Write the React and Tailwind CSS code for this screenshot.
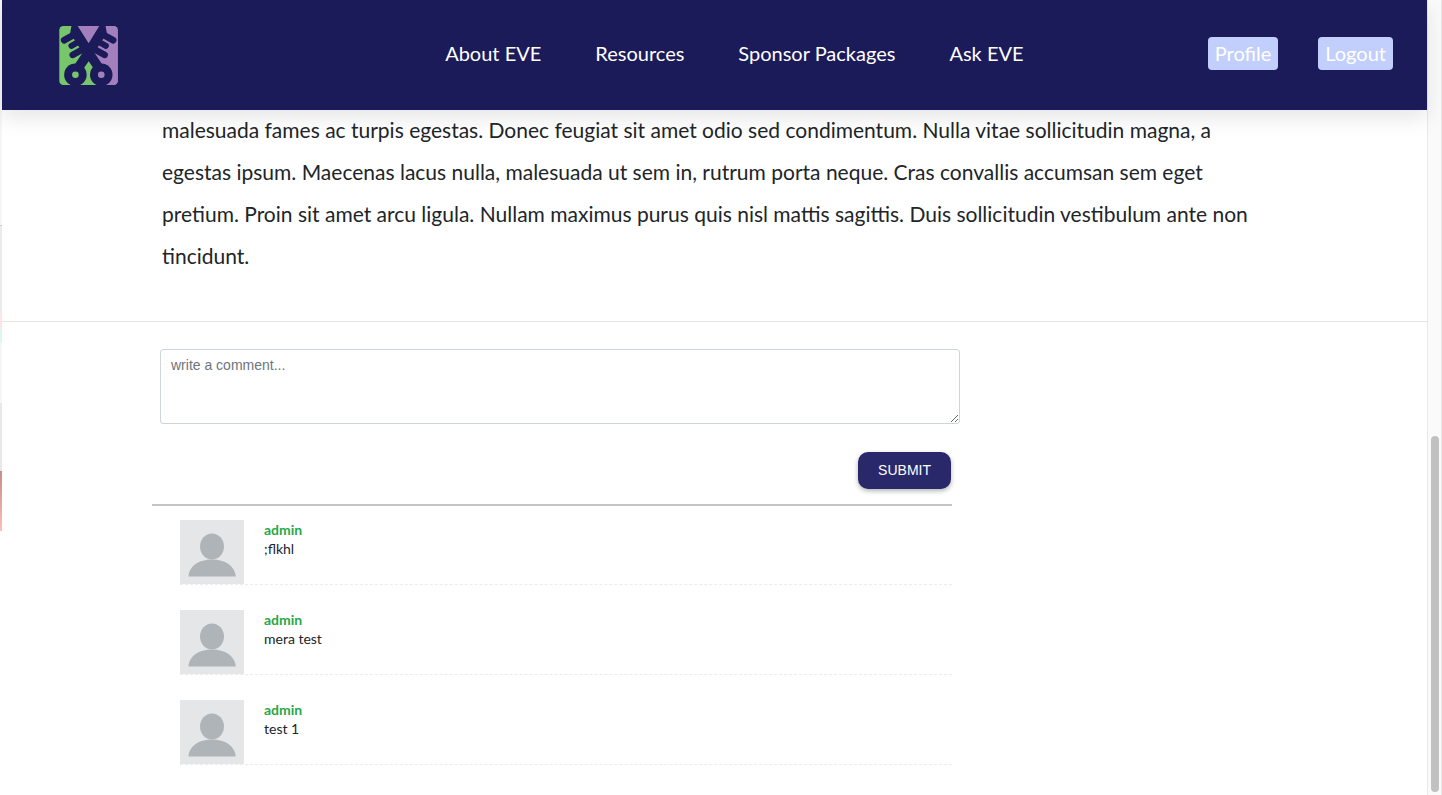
import React from "react";

const links = ["About EVE", "Resources", "Sponsor Packages", "Ask EVE"];

const comments = [
  { id: 1, author: "admin", text: ";flkhl" },
  { id: 2, author: "admin", text: "mera test" },
  { id: 3, author: "admin", text: "test 1" },
];

function Logo() {
  return (
    <svg viewBox="57 46 177 178" className="size-[59px]" role="img" aria-label="EVE">
      <defs>
        <clipPath id="logo-frame">
          <rect x="57" y="46" width="177" height="178" rx="13" />
        </clipPath>
      </defs>
      <g clipPath="url(#logo-frame)">
        <rect x="57" y="46" width="177" height="178" fill="#77c66b" />
        <path d="M113 46H234V224H168V200L146 98Z" fill="#a47fbe" />
        <path d="M146 152L122 180V224H168V180Z" fill="#77c66b" />
        <g fill="none" stroke="#1c1b5a" strokeLinecap="round">
          <path d="M72 89L108 69M220 89L184 69" strokeWidth="20" />
          <path d="M94 106L122 90M198 106L170 90" strokeWidth="18" />
          <path d="M98 133L136 112M194 133L156 112" strokeWidth="20" />
        </g>
        <path
          d="M94 46H113L146 98L178 46H197L201 68L163 126L187 162L170 187L146 152L122 187L104 162L128 126L90 68Z"
          fill="#1c1b5a"
        />
        <circle cx="106" cy="193" r="34" fill="#1c1b5a" />
        <circle cx="184" cy="193" r="34" fill="#1c1b5a" />
        <circle cx="106" cy="193" r="10" fill="#77c66b" />
        <circle cx="184" cy="193" r="10" fill="#a47fbe" />
      </g>
    </svg>
  );
}

function Avatar() {
  return (
    <svg viewBox="0 0 64 64" className="size-16 shrink-0" role="img" aria-label="Avatar">
      <rect width="64" height="64" fill="#e4e6e8" />
      <ellipse cx="32" cy="26.500" rx="12" ry="13" fill="#aeb4b8" />
      <path d="M8.500 56.500C9 46 19 39.500 32 39.500S55 46 55.800 56.500Z" fill="#aeb4b8" />
    </svg>
  );
}

export default function App() {
  return (
    <div className="flex h-screen overflow-hidden bg-white font-[Lato,sans-serif] text-[#212529]">
      <div className="flex w-0.5 shrink-0 flex-col" aria-hidden="true">
        <div className="h-[225px] bg-[#f6f6f6]" />
        <div className="h-[88px] border-t border-[#ccc] bg-[#ebebeb]" />
        <div className="h-[15px] bg-[#ffe4e1]" />
        <div className="h-[15px] bg-[#dcf8ee]" />
        <div className="h-[60px] bg-[#f6f6f6]" />
        <div className="h-[68px] bg-[#e8e8e8]" />
        <div className="h-[60px] bg-linear-to-b from-[#c98a8a] to-[#ffbdbd]" />
      </div>

      <div className="min-w-0 flex-1">
        <header className="relative flex h-[110px] items-center justify-between bg-[#1c1b5a] pr-[34px] pl-[57px] text-xl text-white shadow-[0_8px_20px_rgba(0,0,0,0.1)]">
          <a href="#home">
            <Logo />
          </a>
          <nav className="flex gap-[54px] pb-1 pl-[143px]">
            {links.map((label) => (
              <a key={label} href="#nav" className="whitespace-nowrap">
                {label}
              </a>
            ))}
          </nav>
          <div className="flex gap-10 pb-1">
            <button type="button" className="h-[33px] rounded bg-[#c2cffc] px-[7px]">
              Profile
            </button>
            <button type="button" className="h-[33px] rounded bg-[#c2cffc] px-[7px]">
              Logout
            </button>
          </div>
        </header>

        <main className="-mt-px">
          <p className="mr-40 ml-40 pb-11 text-[21px] leading-[42px]">
            malesuada fames ac turpis egestas. Donec feugiat sit amet odio sed condimentum. Nulla vitae
            sollicitudin magna, a egestas ipsum. Maecenas lacus nulla, malesuada ut sem in, rutrum porta
            neque. Cras convallis accumsan sem eget pretium. Proin sit amet arcu ligula. Nullam maximus
            purus quis nisl mattis sagittis. Duis sollicitudin vestibulum ante non tincidunt.
          </p>
          <hr className="border-[#e5e5e5]" />

          <section className="ml-[150px] max-w-[800px]">
            <form className="border-b-2 border-[#c4c4c4] pt-[27px] pb-[15px]">
              <textarea
                aria-label="Comment"
                placeholder="write a comment..."
                className="ml-2 block h-[75px] w-full rounded-[3px] border border-[#ced4da] px-2.5 py-[5px] font-['Liberation_Sans',sans-serif] text-sm placeholder:text-[#6c757d]"
              />
              <div className="mt-7 flex justify-end">
                <button
                  type="submit"
                  className="mr-px h-[37px] rounded-[10px] bg-[#29286b] px-5 pb-0.5 font-['Liberation_Sans',sans-serif] text-sm text-white shadow-[0_2px_5px_rgba(0,0,0,0.3)]"
                >
                  SUBMIT
                </button>
              </div>
            </form>

            <ul className="ml-7 flex flex-col gap-[25px] pt-3.5">
              {comments.map((comment) => (
                <li key={comment.id} className="flex gap-5 border-b border-dashed border-[#ececec]">
                  <Avatar />
                  <div className="text-sm leading-[19px]">
                    <p className="font-bold text-[#28a745]">{comment.author}</p>
                    <p>{comment.text}</p>
                  </div>
                </li>
              ))}
            </ul>
          </section>
        </main>
      </div>

      <div
        className="flex w-[15px] shrink-0 flex-col items-center justify-end border-x border-[#e8e8e8] bg-[#fafafa] pb-[3px]"
        aria-hidden="true"
      >
        <div className="h-[356px] w-2 rounded-full bg-[#c1c1c1]" />
      </div>
    </div>
  );
}
